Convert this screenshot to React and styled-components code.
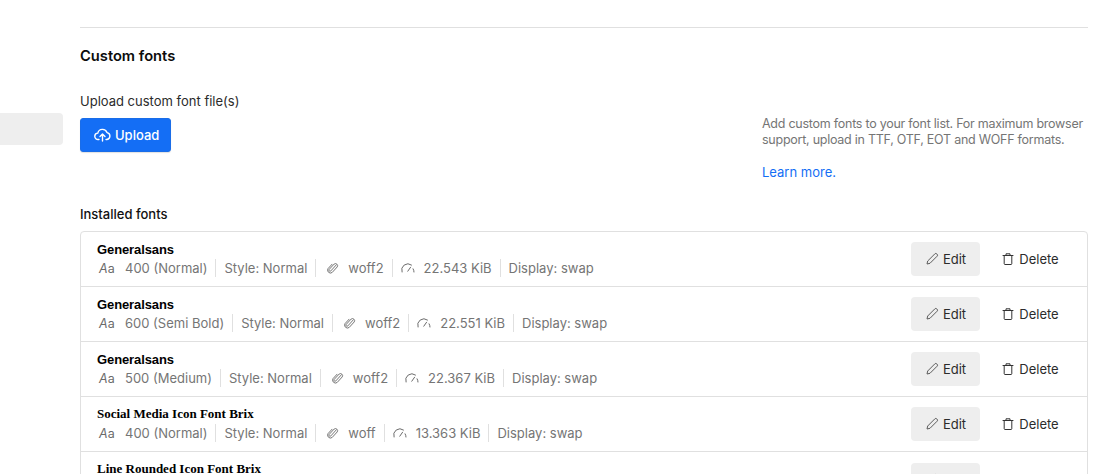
import React from "react";
import styled, { createGlobalStyle } from "styled-components";

const Global = createGlobalStyle`
  html, body { margin: 0; padding: 0; background: #fff; height: 474px; overflow: hidden; }
  body { font-family: Inter, "Liberation Sans", sans-serif; color: #1f1f1f; }
  * { box-sizing: border-box; }
`;

const Page = styled.div`
  display: flex;
  width: 1118px;
  height: 474px;
  overflow: hidden;
`;
const Sidebar = styled.aside`
  width: 80px;
  flex: none;
  padding-top: 113px;
`;
const SideItem = styled.div`
  width: 63px;
  height: 32px;
  background: #eeeeee;
  border-radius: 0 4px 4px 0;
`;
const Main = styled.main`
  width: 1008px;
  flex: none;
  padding-top: 27px;
`;
const Divider = styled.hr`
  margin: 0;
  border: 0;
  border-top: 1px solid #e0e0e0;
`;
const Title = styled.h2`
  margin: 18px 0 0;
  font-size: 14.7px;
  line-height: 20px;
  font-weight: 600;
  color: #0c0c0c;
`;
const UploadRow = styled.section`
  display: flex;
  justify-content: space-between;
  margin-top: 25px;
`;
const UploadColumn = styled.div`
  display: flex;
  flex-direction: column;
  align-items: flex-start;
`;
const Label = styled.div`
  font-size: 13px;
  line-height: 20px;
  color: #2b2b2b;
`;
const UploadButton = styled.button`
  display: flex;
  align-items: center;
  gap: 4px;
  height: 34px;
  width: 91px;
  margin-top: 7px;
  padding: 0 0 0 13px;
  background: #146ef5;
  border: 1px solid #1a6de8;
  border-radius: 3px;
  color: #fff;
  font: 500 13px Inter, sans-serif;
  box-shadow: 0 1px 1px rgba(0,0,0,.12);
`;
const Help = styled.div`
  width: 326px;
  padding-top: 25px;
  font-size: 12.5px;
  letter-spacing: -0.25px;
  line-height: 16px;
  color: #757575;
`;
const HelpLink = styled.a`
  display: block;
  margin-top: 16px;
  font-size: 13px;
  letter-spacing: 0;
  line-height: 16px;
  color: #146ef5;
`;
const SubTitle = styled.h3`
  margin: 26px 0 0;
  font-size: 13px;
  line-height: 16px;
  font-weight: 500;
  color: #111;
`;
const List = styled.div`
  margin-top: 9px;
  border: 1px solid #e0e0e0;
  border-radius: 4px;
`;
const Row = styled.div`
  display: flex;
  align-items: center;
  justify-content: space-between;
  height: 55px;
  padding: 0 16px;
  border-bottom: 1px solid #e0e0e0;
  &:last-child { border-bottom: 0; }
`;
const Info = styled.div`
  display: flex;
  flex-direction: column;
  padding-top: 1px;
`;
const FontName = styled.div`
  font-family: ${p => (p.$serif ? '"Liberation Serif", serif' : '"Liberation Sans", sans-serif')};
  font-size: 13px;
  font-weight: 700;
  line-height: 16px;
  margin: ${p => (p.$serif ? "-1px 0 1px" : "0")};
  letter-spacing: ${p => (p.$serif ? "0" : "-0.1px")};
  color: #000;
`;
const Meta = styled.div`
  display: flex;
  align-items: center;
  height: 19px;
  margin-top: 1px;
  font-size: 13px;
  color: #757575;
  white-space: nowrap;
`;
const MetaPart = styled.span`
  display: flex;
  align-items: center;
  height: 18px;
  gap: 9px;
  padding: 0 8px;
  border-left: 1px solid #e0e0e0;
  &:first-child { padding-left: 2px; border-left: 0; }
  &:last-child { padding-right: 0; }
`;
const Aa = styled.span`
  display: inline-flex;
  font-size: 12.5px;
  color: #6b6b6b;
  width: 17px;
  & i { font-style: italic; }
`;
const Actions = styled.div`
  display: flex;
  align-items: center;
  gap: 12px;
  margin-right: 3px;
`;
const Action = styled.button`
  display: flex;
  align-items: center;
  justify-content: center;
  gap: 4px;
  width: ${p => (p.$primary ? "69px" : "76px")};
  height: 34px;
  padding: 0;
  border: 0;
  border-radius: 4px;
  background: ${p => (p.$primary ? "#eeeeee" : "transparent")};
  color: #2b2b2b;
  font: 400 13px Inter, sans-serif;
`;
const ClipIcon = styled.svg`
  margin-left: 2px;
`;

const Cloud = () => (
  <svg width="17" height="14" viewBox="0 0 17 14" fill="none" stroke="#fff" strokeWidth="1.4" strokeLinecap="round" strokeLinejoin="round">
    <path d="M5 11.5H4.2A3.2 3.2 0 0 1 3.8 5.1 4.8 4.8 0 0 1 13 4.6a3.5 3.5 0 0 1 0 6.9h-1" />
    <path d="M8.5 13V6.2M6 8.5l2.5-2.5L11 8.5" />
  </svg>
);
const Clip = () => (
  <ClipIcon width="13" height="13" viewBox="0 0 14 14" fill="none" stroke="#6b6b6b" strokeWidth="1" strokeLinecap="round">
    <path d="M11 3.2 5.2 9.6a1.2 1.2 0 0 1-1.8-1.6l5.4-5.8a2.3 2.3 0 0 1 3.3 3.1l-5.5 6a3.1 3.1 0 0 1-4.4-4.2L6.5 2.4" />
  </ClipIcon>
);
const Gauge = () => (
  <svg width="14" height="10" viewBox="0 0 14 10" fill="none" stroke="#6b6b6b" strokeWidth="1" strokeLinecap="round">
    <path d="M1 9A6.2 6.2 0 0 1 10.5 2" />
    <path d="M13 9a6 6 0 0 0-.9-3.2" />
    <path d="M6.8 8.2 9.6 4.2" />
  </svg>
);
const Pencil = () => (
  <svg width="14" height="14" viewBox="0 0 14 14" fill="none" stroke="#5c5c5c" strokeWidth="1" strokeLinejoin="round">
    <path d="M2 12l.7-3L9.8 1.9a1.4 1.4 0 0 1 2 0l.3.3a1.4 1.4 0 0 1 0 2L5 11.3 2 12z" />
  </svg>
);
const Trash = () => (
  <svg width="14" height="14" viewBox="0 0 14 14" fill="none" stroke="#333" strokeWidth="1" strokeLinecap="round">
    <path d="M2 3.5h10M5 3.5V1.8h4v1.7M3.2 3.5v8.2c0 .5.3.8.8.8h6c.5 0 .8-.3.8-.8V3.5" />
  </svg>
);

const fonts = [
  { name: "Generalsans", weight: "400 (Normal)", ext: "woff2", size: "22.543 KiB" },
  { name: "Generalsans", weight: "600 (Semi Bold)", ext: "woff2", size: "22.551 KiB" },
  { name: "Generalsans", weight: "500 (Medium)", ext: "woff2", size: "22.367 KiB" },
  { name: "Social Media Icon Font Brix", serif: true, weight: "400 (Normal)", ext: "woff", size: "13.363 KiB" },
  { name: "Line Rounded Icon Font Brix", serif: true, weight: "400 (Normal)", ext: "woff", size: "13.363 KiB" },
];

export default function App() {
  return (
    <Page>
      <Global />
      <Sidebar><SideItem /></Sidebar>
      <Main>
        <Divider />
        <Title>Custom fonts</Title>
        <UploadRow>
          <UploadColumn>
            <Label>Upload custom font file(s)</Label>
            <UploadButton><Cloud />Upload</UploadButton>
          </UploadColumn>
          <Help>
            Add custom fonts to your font list. For maximum browser support, upload in TTF, OTF, EOT and WOFF formats.
            <HelpLink>Learn more.</HelpLink>
          </Help>
        </UploadRow>
        <SubTitle>Installed fonts</SubTitle>
        <List>
          {fonts.map((f, i) => (
            <Row key={i}>
              <Info>
                <FontName $serif={f.serif}>{f.name}</FontName>
                <Meta>
                  <MetaPart><Aa><i>A</i>a</Aa>{f.weight}</MetaPart>
                  <MetaPart>Style: Normal</MetaPart>
                  <MetaPart><Clip />{f.ext}</MetaPart>
                  <MetaPart><Gauge />{f.size}</MetaPart>
                  <MetaPart>Display: swap</MetaPart>
                </Meta>
              </Info>
              <Actions>
                <Action $primary><Pencil />Edit</Action>
                <Action><Trash />Delete</Action>
              </Actions>
            </Row>
          ))}
        </List>
      </Main>
    </Page>
  );
}
